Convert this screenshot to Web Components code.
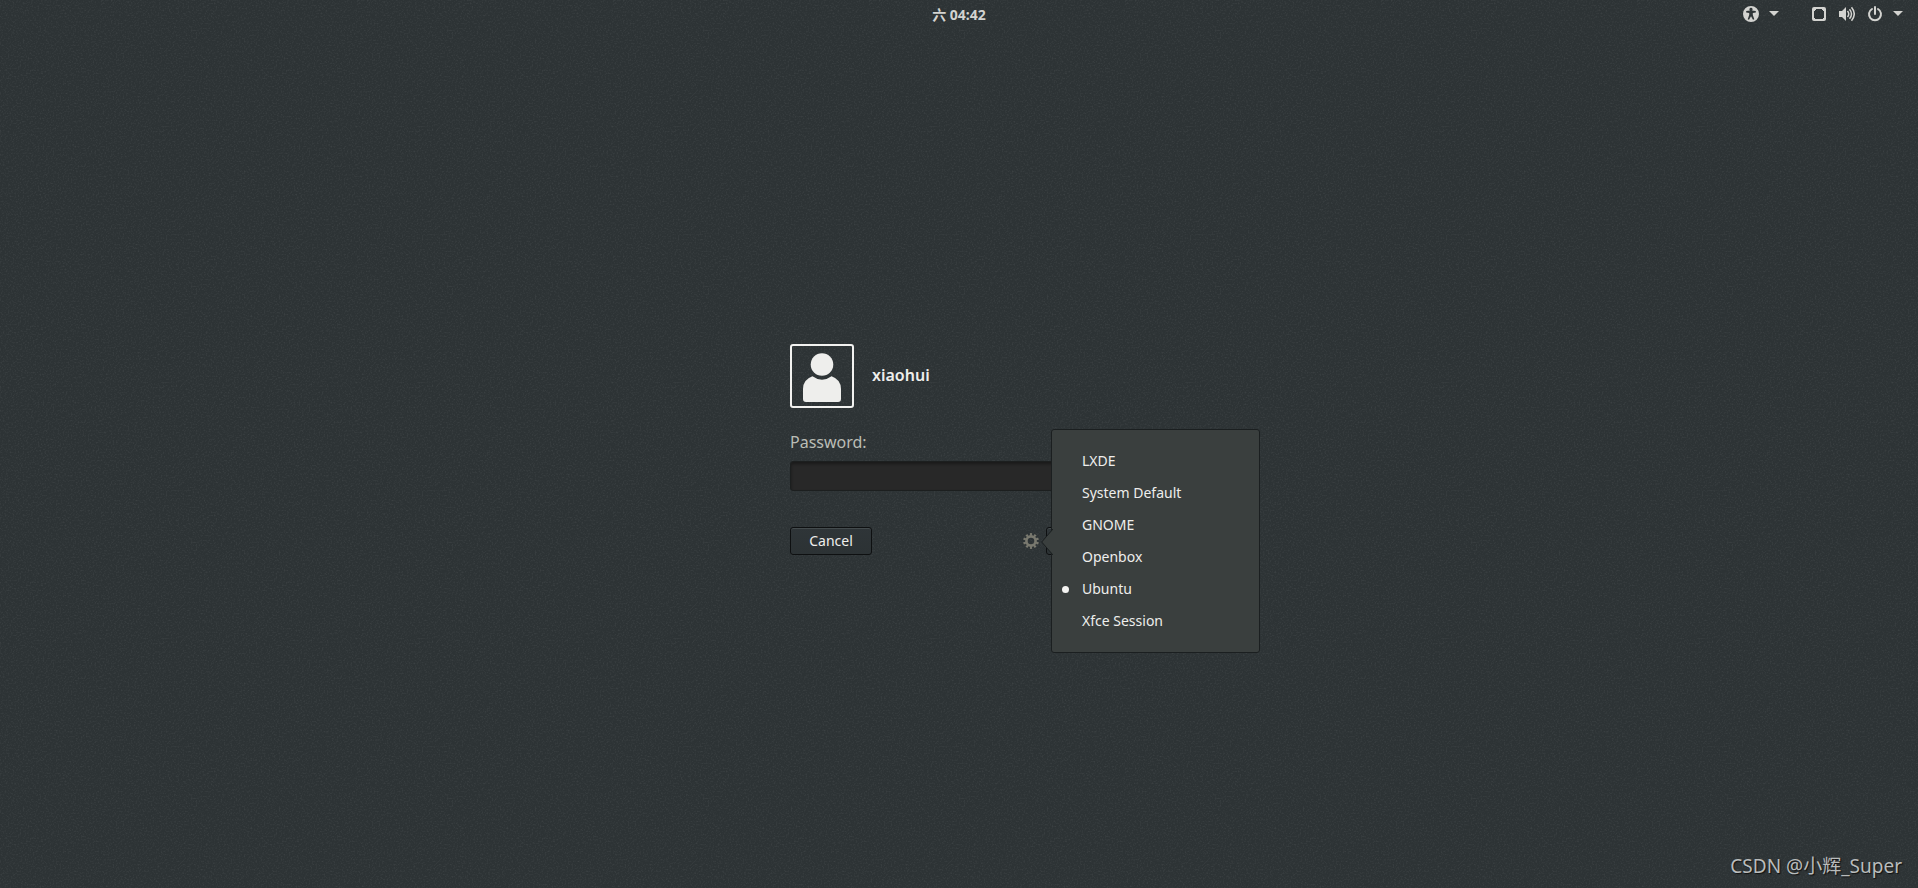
<!DOCTYPE html>
<html lang="en">
<head>
<meta charset="utf-8">
<title>Login</title>
<style>
html, body { margin: 0; }
body { font-family: "Noto Sans", "Noto Sans CJK SC", sans-serif; color: #eeeeec; background: #2e3436; }
</style>
</head>
<body>
<login-screen></login-screen>

<template id="t-screen">
<style>
:host { display: grid; grid-template-rows: auto 1fr auto; min-height: 100vh; position: relative; overflow: hidden;
  background: #2d3335 url("data:image/svg+xml,%3Csvg xmlns='http://www.w3.org/2000/svg' width='256' height='256'%3E%3Cfilter id='n' x='0' y='0' width='100%25' height='100%25' color-interpolation-filters='sRGB'%3E%3CfeTurbulence type='fractalNoise' baseFrequency='0.6' numOctaves='2' stitchTiles='stitch'/%3E%3CfeColorMatrix values='0 0 0 0 1 0 0 0 0 1 0 0 0 0 1 0.16 0 0 0 -0.076'/%3E%3C/filter%3E%3Crect width='256' height='256' filter='url(%23n)'/%3E%3C/svg%3E"); }
main { display: grid; place-items: center; padding-top: 28px; }
footer { padding: 8px 16px; text-align: right; font-size: 19px; line-height: 28px; color: #b9bcbc; text-shadow: 1px 1px 1px #111; }
</style>
<top-panel></top-panel>
<main><login-form user="xiaohui"></login-form></main>
<footer>CSDN @小辉_Super</footer>
</template>

<template id="t-panel">
<style>
:host { display: grid; grid-template-columns: 1fr auto 1fr; align-items: center; height: 27px; color: #d3d3d0; }
time { grid-column: 2; font-size: 14px; line-height: 20px; font-weight: 700; padding-top: 2px; }
nav { display: flex; justify-content: flex-end; gap: 32px; padding-right: 15px; }
button { display: flex; align-items: center; gap: 12px; padding: 0; border: 0; background: none; color: inherit; height: 26px; }
svg { display: block; fill: currentColor; }
.arrow { margin-left: -2px; }
</style>
<time>六 04:42</time>
<nav>
<button aria-label="Accessibility">
<svg width="16" height="16" viewBox="0 0 16 16"><path fill-rule="evenodd" d="M8 0a8 8 0 1 0 0 16A8 8 0 0 0 8 0zM8 1.800a1.500 1.500 0 0 1 1 2.700l3.800 .6v1.400l-3 .6v2l1.500 4.200-1.300.5L8 10.200 6 13.800l-1.300-.5 1.500-4.200v-2l-3-.6V5.100L7 4.500a1.500 1.500 0 0 1 1-2.700z"/></svg>
<svg class="arrow" width="10" height="5"><path d="M0 0h10L5 5z"/></svg>
</button>
<button aria-label="System">
<svg width="16" height="16" viewBox="0 0 16 16"><path fill-rule="evenodd" d="M3 1h10a2 2 0 0 1 2 2v10a2 2 0 0 1-2 2H3a2 2 0 0 1-2-2V3a2 2 0 0 1 2-2zM5 3v1H4v1H3v7h1v1h8v-1h1V5h-1V4h-1V3z"/></svg>
<svg width="16" height="16" viewBox="0 0 16 16"><path d="M0 5h3l4-4v14l-4-4H0z"/><path d="M8.500 5q2.500 3 0 6M10.500 3.200q4 4.800 0 9.600M12.500 1.200q5.500 6.800 0 13.600" fill="none" stroke="currentColor" stroke-width="1.500"/></svg>
<svg width="16" height="16" viewBox="0 0 16 16"><path d="M5 3a6 6 0 1 0 6 0M8 1v7" fill="none" stroke="currentColor" stroke-width="2" stroke-linecap="round"/></svg>
<svg class="arrow" width="10" height="5"><path d="M0 0h10L5 5z"/></svg>
</button>
</nav>
</template>

<template id="t-form">
<style>
:host { display: block; width: 338px; }
.user { display: flex; align-items: center; gap: 18px; font-size: 16px; font-weight: 600; }
.name { padding-bottom: 2px; }
.avatar { box-sizing: border-box; width: 64px; height: 64px; border: 2px solid #f2f2f0; border-radius: 3px; }
.avatar svg { display: block; fill: #eeeeec; }
label { display: block; margin-top: 22px; font-size: 16px; line-height: 24px; color: #babdb6; }
input { display: block; box-sizing: border-box; width: 100%; height: 30px; margin-top: 7px; padding: 0 8px; border: 1px solid #1c1f1f; border-radius: 3px; background: #282828; color: #eee; box-shadow: inset 0 2px 3px #1a1a1a; outline: 0; }
.actions { display: flex; align-items: center; margin-top: 36px; }
.btn { box-sizing: border-box; height: 28px; width: 82px; padding: 0; font: 14px/20px "Noto Sans", sans-serif; color: #eeeeec; background: linear-gradient(#2f3538, #2c3234); border: 1px solid #0e1011; border-radius: 3px; box-shadow: inset 0 1px #444b4d; }
.session { position: relative; margin-left: auto; margin-right: 7px; }
.gear { display: block; padding: 0; border: 0; background: none; color: #79796f; }
.gear svg { display: block; }
session-menu { position: absolute; left: 28px; top: -104px; z-index: 1; }
</style>
<div class="user">
<div class="avatar"><svg width="60" height="60" viewBox="0 0 60 60"><circle cx="30" cy="18.500" r="11.300"/><path d="M20.500 30.200q9.500 7 19 0Q49 33.500 49 43v10q0 3-3 3H14q-3 0-3-3V43q0-9.500 9.500-12.800z"/></svg></div>
<span class="name"></span>
</div>
<label for="pw">Password:</label>
<input id="pw" type="password">
<div class="actions">
<button class="btn">Cancel</button>
<div class="session">
<button class="gear" aria-label="Choose session"><svg width="16" height="16" viewBox="-8 -8 16 16"><circle r="4.600" fill="none" stroke="currentColor" stroke-width="2.600"/><circle r="6.600" fill="none" stroke="currentColor" stroke-width="2.600" pathLength="100" stroke-dasharray="5 5" stroke-dashoffset="-22.500" /></svg></button>
<session-menu>
<session-item>LXDE</session-item>
<session-item>System Default</session-item>
<session-item>GNOME</session-item>
<session-item>Openbox</session-item>
<session-item selected>Ubuntu</session-item>
<session-item>Xfce Session</session-item>
</session-menu>
</div>
<button class="btn" aria-label="Sign In"></button>
</div>
</template>

<template id="t-menu">
<style>
:host { display: block; box-sizing: border-box; width: 209px; padding: 15px 0; background: #3a3f3e; border: 1px solid #1b1f20; border-radius: 3px; }
svg { position: absolute; left: -11px; top: 99px; }
</style>
<svg width="12" height="26" viewBox="0 0 12 26"><path d="M12 0L.7 13 12 26" fill="#3a3f3e" stroke="#1b1f20"/></svg>
<slot></slot>
</template>

<template id="t-item">
<style>
:host { display: block; }
button { display: flex; align-items: center; box-sizing: border-box; width: 100%; height: 32px; padding: 0 0 0 10px; gap: 13px; border: 0; background: none; color: #eeeeec; font: 14px/20px "Noto Sans", sans-serif; }
i { width: 7px; height: 7px; border-radius: 50%; }
:host([selected]) i { background: #f4f4f2; }
</style>
<button><i></i><slot></slot></button>
</template>

<script>
const mount = (host, id) => {
  const root = host.attachShadow({ mode: "open" });
  root.append(document.getElementById(id).content.cloneNode(true));
  return root;
};
customElements.define("session-item", class extends HTMLElement {
  constructor() { super(); mount(this, "t-item"); }
});
customElements.define("session-menu", class extends HTMLElement {
  constructor() { super(); mount(this, "t-menu"); }
});
customElements.define("top-panel", class extends HTMLElement {
  constructor() { super(); mount(this, "t-panel"); }
});
customElements.define("login-form", class extends HTMLElement {
  connectedCallback() {
    if (!this.shadowRoot) mount(this, "t-form");
    this.shadowRoot.querySelector(".name").textContent = this.getAttribute("user");
  }
});
customElements.define("login-screen", class extends HTMLElement {
  constructor() { super(); mount(this, "t-screen"); }
});
</script>
</body>
</html>
